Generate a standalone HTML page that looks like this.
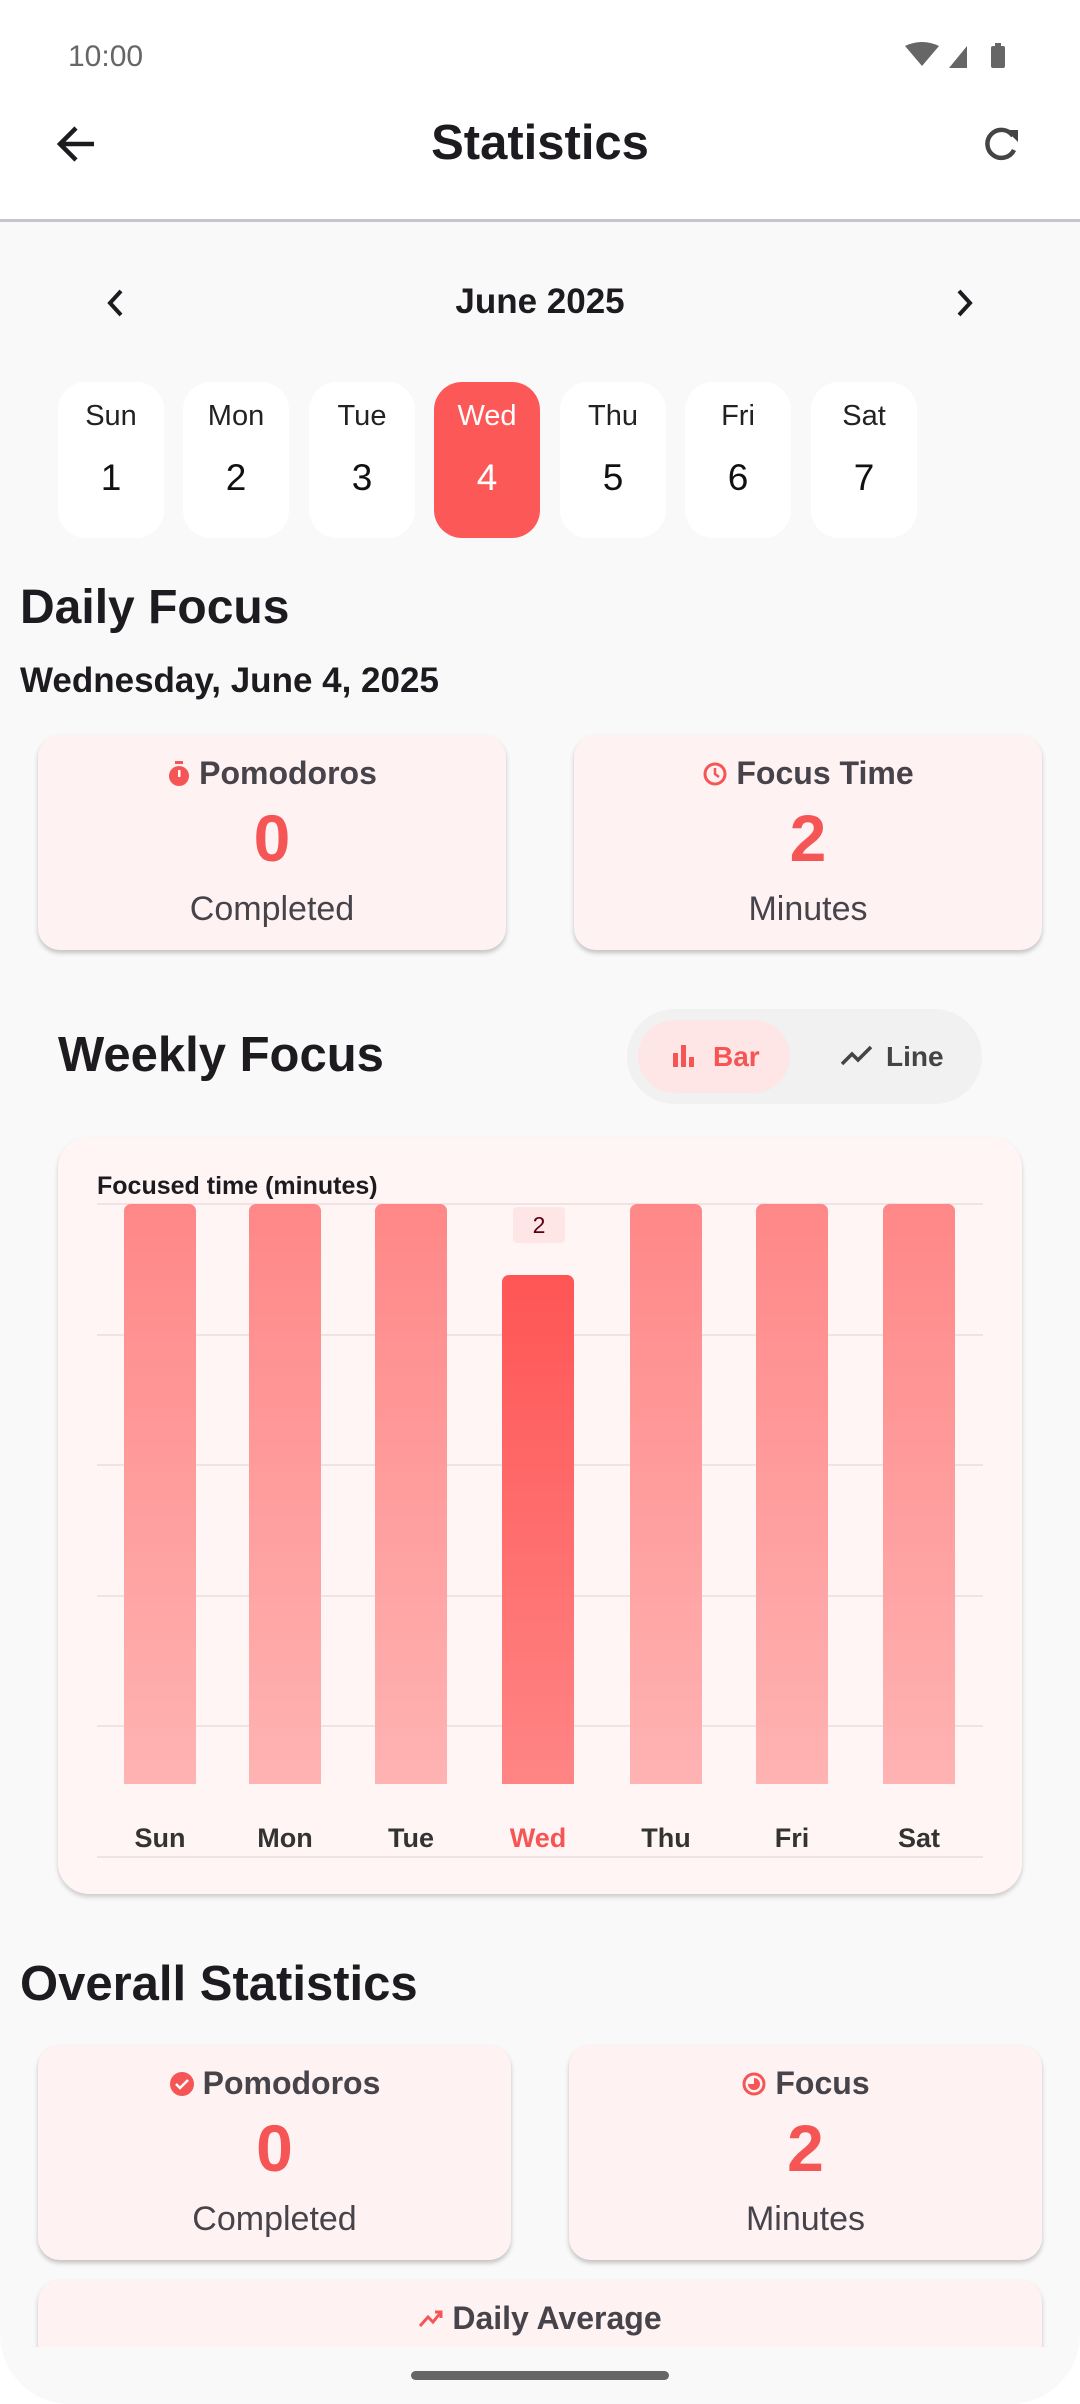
<!DOCTYPE html>
<html><head><meta charset="utf-8"><style>
*{margin:0;padding:0;box-sizing:border-box}
body{width:1080px;height:2404px;background:#fff;font-family:"Liberation Sans",sans-serif;position:relative;overflow:hidden;color:#1d1b20}
.a{position:absolute}
.screen{left:0;top:0;width:1080px;height:2404px;background:#f9f9f9;border-radius:0 0 70px 70px;overflow:hidden}
.c{text-align:center}
.day{width:106px;height:156px;top:382px;background:#fff;border-radius:28px;text-align:center}
.day .n{font-size:29px;margin-top:18px;color:#222}
.day .d{font-size:37px;margin-top:24px;color:#111}
.card{background:#fff2f2;border-radius:22px;box-shadow:0 3px 5px rgba(0,0,0,.22);text-align:center}
.card .t{font-size:32px;color:#46434a;margin-top:20px;font-weight:bold;display:flex;justify-content:center;align-items:center;gap:8px}
.card .v{font-size:66px;font-weight:bold;color:#f55555;line-height:76px;margin-top:8px}
.card .s{font-size:34px;color:#46434a;margin-top:14px}
.grid{left:97px;width:886px;height:2px;background:#f0e3e3}
.bar{width:72px;border-radius:7px 7px 0 0;background:linear-gradient(#ff8787,#ffb3b3)}
.lbl{top:1823px;font-size:27px;color:#333;width:100px;text-align:center;font-weight:bold}
</style></head><body>
<div class="a screen">
 <div class="a" style="left:0;top:0;width:1080px;height:222px;background:#fff;border-bottom:3px solid #c8c4cc"></div>
 <div class="a" style="left:68px;top:40px;font-size:30px;color:#666">10:00</div>
 <svg class="a" style="left:905px;top:42px" width="110" height="28"><path d="M0 4 Q17 -4 34 4 L17 24Z" fill="#666"/><path d="M44 26 L62 4 L62 26Z" fill="#666"/><rect x="86" y="4" width="14" height="22" rx="2" fill="#666"/><rect x="90" y="1" width="6" height="4" fill="#666"/></svg>
 <svg class="a" style="left:54px;top:124px" width="44" height="40"><path d="M40 20H6M22 4L6 20l16 16" stroke="#1d1b20" stroke-width="4.5" fill="none"/></svg>
 <div class="a c" style="left:0;width:1080px;top:115px;font-size:49px;font-weight:bold">Statistics</div>
 <svg class="a" style="left:980px;top:122px" width="44" height="44"><path d="M34 28a14 14 0 1 1-1-14" stroke="#444" stroke-width="4.5" fill="none"/><path d="M26 8h12v12z" fill="#444"/></svg>

 <svg class="a" style="left:103px;top:288px" width="24" height="30"><path d="M18 3L7 15l11 12" stroke="#1d1b20" stroke-width="4" fill="none"/></svg>
 <div class="a c" style="left:0;width:1080px;top:282px;font-size:35px;font-weight:bold">June 2025</div>
 <svg class="a" style="left:953px;top:288px" width="24" height="30"><path d="M6 3l11 12L6 27" stroke="#1d1b20" stroke-width="4" fill="none"/></svg>

 <div class="a day" style="left:58px"><div class="n">Sun</div><div class="d">1</div></div>
 <div class="a day" style="left:183px"><div class="n">Mon</div><div class="d">2</div></div>
 <div class="a day" style="left:309px"><div class="n">Tue</div><div class="d">3</div></div>
 <div class="a day" style="left:434px;background:#fd5858"><div class="n" style="color:#fff">Wed</div><div class="d" style="color:#fff">4</div></div>
 <div class="a day" style="left:560px"><div class="n">Thu</div><div class="d">5</div></div>
 <div class="a day" style="left:685px"><div class="n">Fri</div><div class="d">6</div></div>
 <div class="a day" style="left:811px"><div class="n">Sat</div><div class="d">7</div></div>

 <div class="a" style="left:20px;top:580px;font-size:48px;font-weight:bold">Daily Focus</div>
 <div class="a" style="left:20px;top:661px;font-size:35px;font-weight:bold">Wednesday, June 4, 2025</div>

 <div class="a card" style="left:38px;top:735px;width:468px;height:215px">
  <div class="t"><svg width="24" height="28"><rect x="8" y="1" width="8" height="3" fill="#f55555"/><circle cx="12" cy="16" r="10" fill="#f55555"/><rect x="11" y="10" width="2.5" height="7" fill="#fff"/></svg>Pomodoros</div>
  <div class="v">0</div><div class="s">Completed</div></div>
 <div class="a card" style="left:574px;top:735px;width:468px;height:215px">
  <div class="t"><svg width="26" height="26"><circle cx="13" cy="13" r="10" stroke="#f55555" stroke-width="3" fill="none"/><path d="M13 7v6l4 3" stroke="#f55555" stroke-width="2.5" fill="none"/></svg>Focus Time</div>
  <div class="v">2</div><div class="s">Minutes</div></div>

 <div class="a" style="left:58px;top:1027px;font-size:49px;font-weight:bold">Weekly Focus</div>
 <div class="a" style="left:627px;top:1009px;width:355px;height:95px;border-radius:48px;background:#f1f1f1"></div>
 <div class="a" style="left:638px;top:1020px;width:152px;height:73px;border-radius:37px;background:#ffe6e6"></div>
 <svg class="a" style="left:671px;top:1043px" width="26" height="26"><rect x="2" y="10" width="5" height="14" fill="#f55555"/><rect x="10" y="2" width="5" height="22" fill="#f55555"/><rect x="18" y="14" width="5" height="10" fill="#f55555"/></svg>
 <div class="a" style="left:713px;top:1041px;font-size:28px;color:#f55555;font-weight:bold">Bar</div>
 <svg class="a" style="left:840px;top:1044px" width="34" height="24"><path d="M2 20l10-10 6 6 13-13" stroke="#444" stroke-width="3.5" fill="none"/></svg>
 <div class="a" style="left:886px;top:1041px;font-size:28px;color:#444;font-weight:bold">Line</div>

 <div class="a" style="left:58px;top:1137px;width:964px;height:757px;border-radius:31px;background:#fff5f4;box-shadow:0 3px 5px rgba(0,0,0,.18)"></div>
 <div class="a" style="left:97px;top:1172px;font-size:25px;font-weight:bold">Focused time (minutes)</div>
 <div class="a grid" style="top:1203px"></div>
 <div class="a grid" style="top:1334px"></div>
 <div class="a grid" style="top:1464px"></div>
 <div class="a grid" style="top:1595px"></div>
 <div class="a grid" style="top:1725px"></div>
 <div class="a grid" style="top:1856px"></div>
 <div class="a bar" style="left:124px;top:1204px;height:580px"></div>
 <div class="a bar" style="left:249px;top:1204px;height:580px"></div>
 <div class="a bar" style="left:375px;top:1204px;height:580px"></div>
 <div class="a bar" style="left:502px;top:1275px;height:509px;background:linear-gradient(#ff5555,#ff8585)"></div>
 <div class="a bar" style="left:630px;top:1204px;height:580px"></div>
 <div class="a bar" style="left:756px;top:1204px;height:580px"></div>
 <div class="a bar" style="left:883px;top:1204px;height:580px"></div>
 <div class="a c" style="left:513px;top:1207px;width:52px;height:36px;background:#ffe6e6;border-radius:4px;font-size:23px;line-height:36px;color:#5a0010">2</div>
 <div class="a lbl" style="left:110px">Sun</div>
 <div class="a lbl" style="left:235px">Mon</div>
 <div class="a lbl" style="left:361px">Tue</div>
 <div class="a lbl" style="left:488px;color:#f55555">Wed</div>
 <div class="a lbl" style="left:616px">Thu</div>
 <div class="a lbl" style="left:742px">Fri</div>
 <div class="a lbl" style="left:869px">Sat</div>

 <div class="a" style="left:20px;top:1956px;font-size:49px;font-weight:bold">Overall Statistics</div>
 <div class="a card" style="left:38px;top:2045px;width:473px;height:215px">
  <div class="t"><svg width="26" height="26"><circle cx="13" cy="13" r="12" fill="#f55555"/><path d="M7 13l4 4 8-8" stroke="#fff" stroke-width="2.5" fill="none"/></svg>Pomodoros</div>
  <div class="v">0</div><div class="s">Completed</div></div>
 <div class="a card" style="left:569px;top:2045px;width:473px;height:215px">
  <div class="t"><svg width="26" height="26"><circle cx="13" cy="13" r="10" stroke="#f55555" stroke-width="3" fill="none"/><path d="M13 7a6 6 0 1 1-6 6h6z" fill="#f55555"/></svg>Focus</div>
  <div class="v">2</div><div class="s">Minutes</div></div>
 <div class="a card" style="left:38px;top:2280px;width:1004px;height:200px">
  <div class="t" style="margin-top:20px"><svg width="26" height="22"><path d="M2 18l8-9 5 5 8-10M17 4h6v6" stroke="#f55555" stroke-width="3" fill="none"/></svg>Daily Average</div></div>
 <div class="a" style="left:0;top:2347px;width:1080px;height:60px;background:#f9f9f9"></div>
 <div class="a" style="left:411px;top:2371px;width:258px;height:9px;border-radius:5px;background:#666"></div>
</div>
</body></html>
